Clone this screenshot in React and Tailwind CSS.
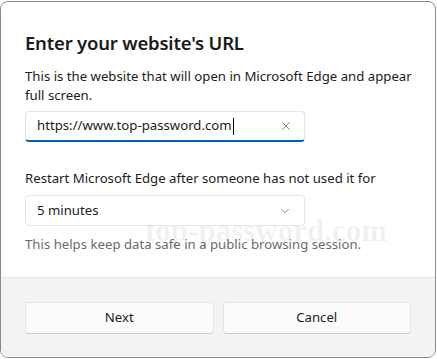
import { X, ChevronDown } from 'lucide-react';

export default function App() {
  return (
    <div className="w-[437px] h-[359px] bg-white pt-px font-['Noto_Sans',sans-serif] text-[#1b1b1b]">
      <div className="relative w-[436px] h-[357px] border border-[#8a8a8a] rounded-lg overflow-hidden flex flex-col bg-white">
        <div className="flex-1 pl-6 pr-4 pt-[27px]">
          <h1 className="text-[18.5px] font-semibold leading-7 tracking-[-0.2px]">Enter your website's URL</h1>
          <p className="mt-[10px] text-[13.2px] leading-[19px]">
            This is the website that will open in Microsoft Edge and appear full screen.
          </p>
          <div className="mt-[6px] w-[280px] h-[31px] flex items-center pl-[11px] pr-[8px] bg-white border border-[#e5e5e5] border-b-2 border-b-[#005fb8] rounded-[4px]">
            <span className="text-[13.2px]">https://www.top-password.com</span>
            <span className="w-px h-[17px] bg-black ml-px" />
            <X className="ml-auto mr-[3px] w-[14px] h-[14px] text-[#5f5f5f]" strokeWidth={1.25} />
          </div>
          <p className="mt-[27px] text-[13.2px] leading-[19px]">Restart Microsoft Edge after someone has not used it for</p>
          <div className="mt-[7px] w-[280px] h-[31px] flex items-center pl-[11px] pr-[12px] bg-white border border-[#e5e5e5] rounded-[4px]">
            <span className="text-[13.2px]">5 minutes</span>
            <ChevronDown className="ml-auto w-[14px] h-[14px] text-[#5f5f5f]" strokeWidth={1.25} />
          </div>
          <p className="mt-[9px] text-[13.2px] leading-[19px] text-[#6b6b6b]">This helps keep data safe in a public browsing session.</p>
        </div>
        <div className="h-[80px] shrink-0 bg-[#f3f3f3] border-t border-[#e5e5e5] flex gap-[9px] px-6 pt-[24px]">
          <button className="w-[189px] h-[32px] bg-[#fbfbfb] border border-[#e5e5e5] border-b-[#cccccc] rounded-[4px] text-[13.2px]">Next</button>
          <button className="w-[189px] h-[32px] bg-[#fbfbfb] border border-[#e5e5e5] border-b-[#cccccc] rounded-[4px] text-[13.2px]">Cancel</button>
        </div>
        <div className="absolute left-[144px] top-[211px] whitespace-nowrap text-[31px] leading-9 font-bold font-['Liberation_Serif',serif] text-black/[0.06] pointer-events-none select-none">
          top-password.com
        </div>
      </div>
    </div>
  );
}
